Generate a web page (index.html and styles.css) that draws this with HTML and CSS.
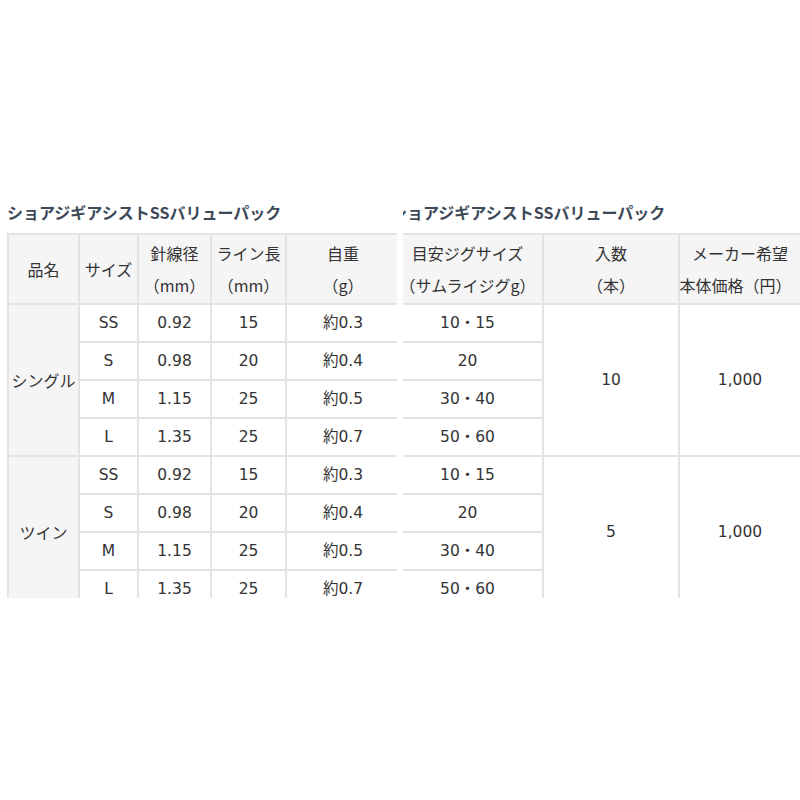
FILE: index.html
```html
<!DOCTYPE html>
<html lang="ja">
<head>
<meta charset="utf-8">
<title>ショアジギアシストSSバリューパック</title>
<link rel="stylesheet" href="styles.css">
</head>
<body>
<div class="screen">
  <div class="panel panel-left">
    <div class="inner">
      <h2 class="title">ショアジギアシストSSバリューパック</h2>
      <table class="spec spec-left">
        <colgroup>
          <col class="c-name"><col class="c-size"><col class="c-wire"><col class="c-line"><col class="c-weight">
        </colgroup>
        <tr class="head">
          <th>品名</th>
          <th>サイズ</th>
          <th>針線径<br>（mm）</th>
          <th>ライン長<br>（mm）</th>
          <th>自重<br>（g）</th>
        </tr>
        <tr><td class="type" rowspan="4">シングル</td><td>SS</td><td>0.92</td><td>15</td><td>約0.3</td></tr>
        <tr><td>S</td><td>0.98</td><td>20</td><td>約0.4</td></tr>
        <tr><td>M</td><td>1.15</td><td>25</td><td>約0.5</td></tr>
        <tr><td>L</td><td>1.35</td><td>25</td><td>約0.7</td></tr>
        <tr><td class="type" rowspan="4">ツイン</td><td>SS</td><td>0.92</td><td>15</td><td>約0.3</td></tr>
        <tr><td>S</td><td>0.98</td><td>20</td><td>約0.4</td></tr>
        <tr><td>M</td><td>1.15</td><td>25</td><td>約0.5</td></tr>
        <tr><td>L</td><td>1.35</td><td>25</td><td>約0.7</td></tr>
      </table>
    </div>
  </div>
  <div class="gap"></div>
  <div class="panel panel-right">
    <div class="inner">
      <h2 class="title">ショアジギアシストSSバリューパック</h2>
      <table class="spec spec-right">
        <colgroup>
          <col class="c-jig"><col class="c-qty"><col class="c-price">
        </colgroup>
        <tr class="head">
          <th>目安ジグサイズ<br>（サムライジグg）</th>
          <th>入数<br>（本）</th>
          <th>メーカー希望<br><span class="wide">本体価格（円）</span></th>
        </tr>
        <tr><td>10・15</td><td rowspan="4">10</td><td rowspan="4">1,000</td></tr>
        <tr><td>20</td></tr>
        <tr><td>30・40</td></tr>
        <tr><td>50・60</td></tr>
        <tr><td>10・15</td><td rowspan="4">5</td><td rowspan="4">1,000</td></tr>
        <tr><td>20</td></tr>
        <tr><td>30・40</td></tr>
        <tr><td>50・60</td></tr>
      </table>
    </div>
  </div>
</div>
</body>
</html>
```

FILE: styles.css
```css
html, body {
  margin: 0;
  padding: 0;
  background: #ffffff;
}

body {
  font-family: "Noto Sans CJK JP", "Noto Sans", sans-serif;
  color: #333333;
}

.screen {
  display: flex;
  width: 800px;
  height: 800px;
}

.panel {
  height: 598px;
  overflow: hidden;
  flex: none;
}

.panel-left {
  width: 397px;
}

.gap {
  width: 6px;
  flex: none;
}

.panel-right {
  width: 397px;
}

.inner {
  padding-top: 200px;
}

.panel-left .inner {
  margin-left: 7px;
}

.panel-right .inner {
  margin-left: -12px;
}

.title {
  margin: 0 0 9px;
  font-size: 16px;
  line-height: 24px;
  font-weight: bold;
  color: #3d4957;
  white-space: nowrap;
}

.spec {
  border-collapse: collapse;
  table-layout: fixed;
}

.spec-left {
  width: 392px;
}

.spec-right {
  width: 409px;
}

.c-name { width: 71px; }
.c-size { width: 59px; }
.c-wire { width: 73px; }
.c-line { width: 75px; }
.c-weight { width: 114px; }

.c-jig { width: 151px; }
.c-qty { width: 136px; }
.c-price { width: 122px; }

.spec th,
.spec td {
  border: 2px solid #e3e3e3;
  padding: 2px 0;
  font-size: 16px;
  line-height: 32px;
  font-weight: normal;
  text-align: center;
  white-space: nowrap;
  color: #333333;
}

.spec td {
  font-family: "DejaVu Sans", "Noto Sans CJK JP", sans-serif;
  font-size: 15.5px;
}

.spec .head th {
  background: #f5f5f5;
}

.spec td.type {
  background: #f5f5f5;
  font-family: "Noto Sans CJK JP", sans-serif;
  font-size: 16px;
}

.wide {
  display: inline-block;
  margin-left: -9px;
}
```
